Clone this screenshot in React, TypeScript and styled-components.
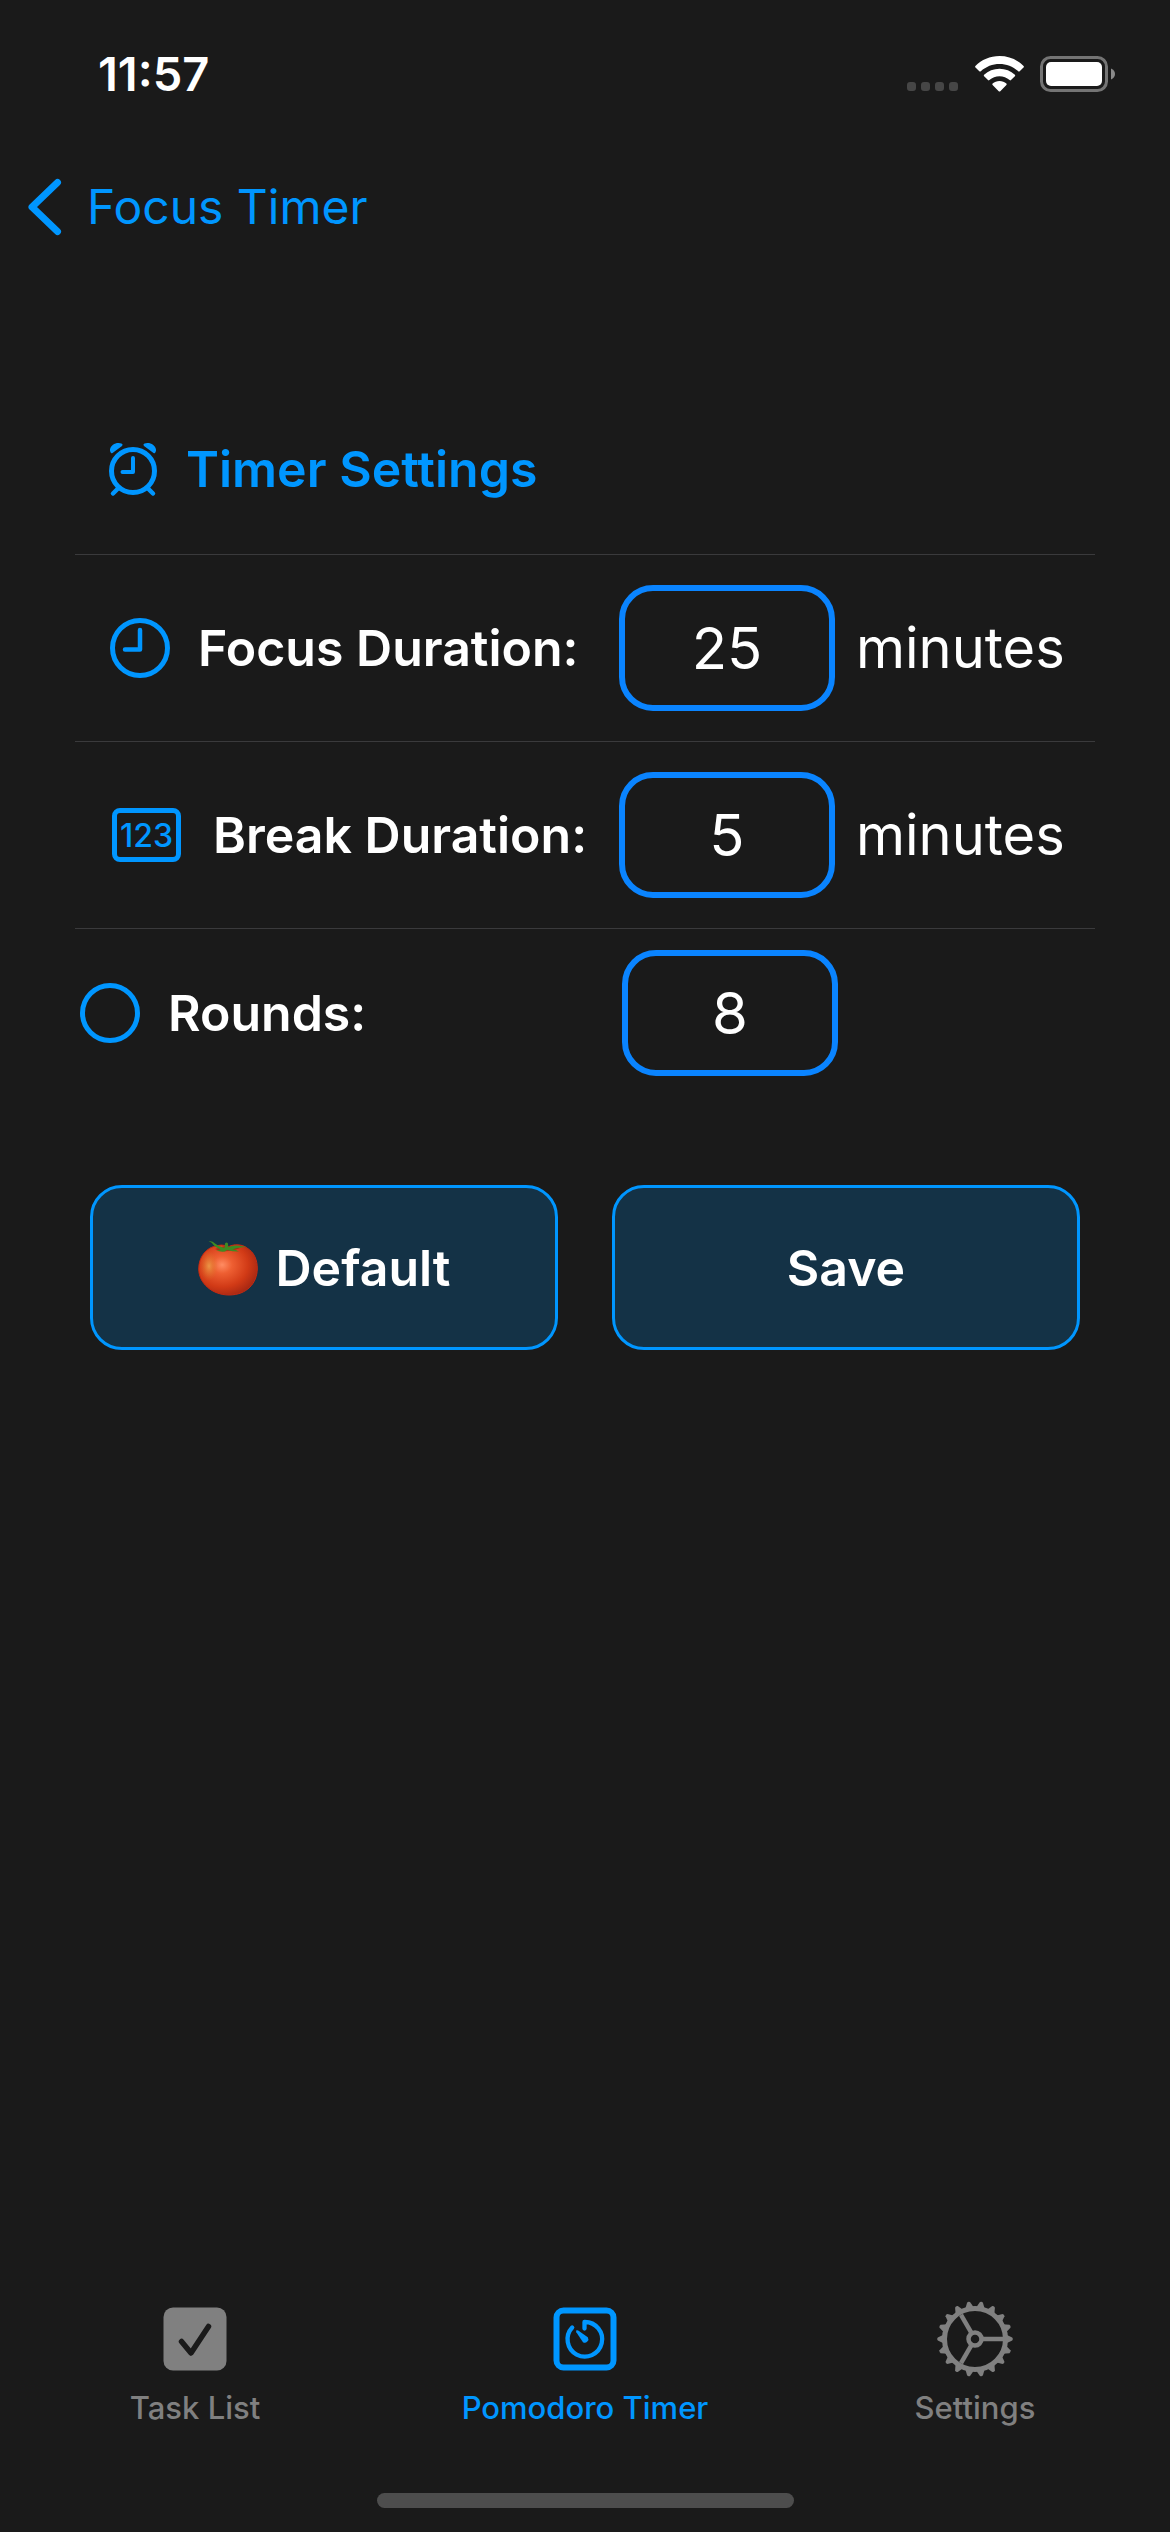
import React, { useState } from "react";
import styled, { createGlobalStyle } from "styled-components";

const accent = "#0096ff";
const fieldBlue = "#0a84ff";
const muted = "#808080";
const surface = "#1a1a1a";

const GlobalStyle = createGlobalStyle`
  *, *::before, *::after { box-sizing: border-box; }
  body {
    margin: 0;
    background: ${surface};
    color: #fff;
    font-family: Inter, "Liberation Sans", sans-serif;
  }
  button, input { font: inherit; color: inherit; margin: 0; }
  svg { display: block; flex: none; }
`;

const Screen = styled.div`
  min-height: 100vh;
  display: flex;
  flex-direction: column;
`;

const StatusBar = styled.div`
  display: flex;
  align-items: center;
  justify-content: space-between;
  height: 148px;
  padding: 0 54px 0 98px;
`;

const Clock = styled.time`
  font-size: 47px;
  line-height: 56px;
  font-weight: 600;
`;

const StatusIcons = styled.div`
  display: flex;
  align-items: center;
  gap: 16px;
`;

const NavBar = styled.nav`
  display: flex;
  align-items: center;
  height: 118px;
  padding-left: 27px;
`;

const BackLink = styled.a`
  display: flex;
  align-items: center;
  gap: 24px;
  color: ${accent};
  font-size: 48px;
  line-height: 60px;
  text-decoration: none;
`;

const Panel = styled.form`
  flex: 1;
  padding: 118px 75px 0;
`;

const Heading = styled.h1`
  display: flex;
  align-items: center;
  gap: 28px;
  height: 171px;
  margin: 0;
  padding-left: 33px;
  border-bottom: 1px solid #3a3a3c;
  color: ${accent};
  font-size: 50px;
  line-height: 60px;
  font-weight: 600;
`;

const Row = styled.div<{ $last?: boolean }>`
  display: grid;
  grid-template-columns: minmax(0, 1fr) 216px ${(p) => (p.$last ? 257 : 260)}px;
  align-items: center;
  padding: ${(p) => (p.$last ? "21px 0" : "30px 0")};
  border-bottom: ${(p) => (p.$last ? "none" : "1px solid #3a3a3c")};
`;

const RowLabel = styled.label<{ $inset: number }>`
  display: flex;
  align-items: center;
  gap: 28px;
  padding-left: ${(p) => p.$inset}px;
  font-size: 50px;
  line-height: 60px;
  font-weight: 600;
  white-space: nowrap;
`;

const NumberField = styled.input`
  width: 100%;
  height: 126px;
  padding: 0;
  border: 6px solid ${fieldBlue};
  border-radius: 34px;
  background: transparent;
  outline: none;
  text-align: center;
  font-size: 58px;
  line-height: 72px;
`;

const Unit = styled.span`
  padding-left: 21px;
  font-size: 56px;
  line-height: 72px;
`;

const Actions = styled.div`
  display: grid;
  grid-template-columns: 1fr 1fr;
  gap: 54px;
  padding: 88px 15px 0;
`;

const ActionButton = styled.button`
  display: flex;
  align-items: center;
  justify-content: center;
  gap: 18px;
  height: 165px;
  padding: 0;
  border: 3px solid ${accent};
  border-radius: 32px;
  background: #143246;
  font-size: 50px;
  line-height: 60px;
  font-weight: 600;
`;

const TabBar = styled.nav`
  display: grid;
  grid-template-columns: repeat(3, 1fr);
`;

const Tab = styled.button<{ $active?: boolean }>`
  display: flex;
  flex-direction: column;
  align-items: center;
  gap: 13px;
  padding: 0;
  border: 0;
  background: none;
  color: ${(p) => (p.$active ? accent : muted)};
  font-size: 31px;
  line-height: 36px;
  font-weight: 500;
`;

const HomeIndicator = styled.div`
  align-self: center;
  width: 417px;
  max-width: 60%;
  height: 15px;
  margin: 67px 0 24px;
  border-radius: 8px;
  background: #4d4d4d;
`;

const SignalDots = () => (
  <svg width="52" height="38" viewBox="0 0 52 38" fill="#464646" aria-hidden="true">
    {[0, 14, 28, 42].map((x) => (
      <rect key={x} x={x} y="27" width="9" height="9" rx="3" />
    ))}
  </svg>
);

const Wifi = () => (
  <svg width="49" height="38" viewBox="0 0 49 38" fill="#fff" aria-hidden="true">
    <path d="M24.5 1C34 1 42.500 4.800 48.600 11Q49.200 11.800 48.500 12.500L44.700 16.300Q43.900 16.900 43.200 16.200C38 11.600 31.500 9 24.500 9S11 11.600 5.800 16.200Q5.100 16.900 4.300 16.300L.5 12.500Q-.2 11.800.4 11C6.500 4.800 15 1 24.500 1Z" />
    <path d="M24.500 13.800C30.400 13.800 35.800 16 39.900 19.800Q40.600 20.500 39.900 21.200L36 25.100Q35.300 25.700 34.600 25.100C31.800 22.700 28.300 21.300 24.500 21.300S17.200 22.700 14.400 25.100Q13.700 25.700 13 25.100L9.100 21.200Q8.400 20.500 9.100 19.800C13.200 16 18.600 13.800 24.500 13.800Z" />
    <path d="M24.500 26C27.200 26 29.600 26.900 31.400 28.500Q32.100 29.200 31.400 29.900L25.300 36.200Q24.500 36.900 23.700 36.200L17.600 29.900Q16.900 29.200 17.600 28.500C19.400 26.900 21.800 26 24.500 26Z" />
  </svg>
);

const Battery = () => (
  <svg width="76" height="38" viewBox="0 0 76 38" aria-hidden="true">
    <rect x="1.500" y="2.500" width="65" height="33" rx="9" fill="none" stroke="#747474" strokeWidth="3" />
    <rect x="6" y="7" width="56" height="24" rx="5" fill="#fff" />
    <path d="M71 13.500C73.600 14.600 75 16.600 75 19S73.600 23.400 71 24.500Z" fill="#8a8a8a" />
  </svg>
);

const Chevron = () => (
  <svg width="36" height="60" viewBox="0 0 36 60" fill="none" stroke={accent} strokeWidth="7" strokeLinecap="round" strokeLinejoin="round" aria-hidden="true">
    <path d="M30.500 5.500 5 30 30.500 54.500" />
  </svg>
);

const AlarmClock = () => (
  <svg width="50" height="56" viewBox="0 0 50 56" fill="none" stroke={accent} strokeLinecap="round" strokeLinejoin="round" aria-hidden="true">
    <circle cx="25" cy="30" r="21.500" strokeWidth="5" />
    <path d="M25 17V31H14.500" strokeWidth="4" />
    <path d="M10.500 47 5 52.500M39.500 47 45 52.500" strokeWidth="4.500" />
    <path d="M2 8.500C3 3.500 9 .5 14 2.800Q15.200 3.800 14 5L4.500 12Q3 12.800 2.500 11Q1.800 10 2 8.500ZM48 8.500C47 3.500 41 .5 36 2.800Q34.800 3.800 36 5L45.500 12Q47 12.800 47.500 11Q48.200 10 48 8.500Z" fill={accent} stroke="none" />
  </svg>
);

const NineOClock = () => (
  <svg width="60" height="60" viewBox="0 0 60 60" fill="none" stroke={accent} strokeLinecap="round" strokeLinejoin="round" aria-hidden="true">
    <circle cx="30" cy="30" r="27.500" strokeWidth="5" />
    <path d="M30 12V31.500H15" strokeWidth="4.500" />
  </svg>
);

const NumbersBox = () => (
  <svg width="75" height="56" viewBox="0 0 75 56" aria-hidden="true">
    <rect x="4.500" y="3.500" width="64" height="49" rx="5.500" fill="none" stroke={accent} strokeWidth="5" />
    <text x="36.500" y="39.500" textAnchor="middle" fill={accent} fontSize="32" fontWeight="500">123</text>
  </svg>
);

const Ring = () => (
  <svg width="60" height="60" viewBox="0 0 60 60" fill="none" stroke={accent} strokeWidth="5" aria-hidden="true">
    <circle cx="30" cy="30" r="27.500" />
  </svg>
);

const Tomato = () => (
  <svg width="60" height="56" viewBox="0 0 60 56" aria-hidden="true">
    <defs>
      <radialGradient id="tomatoSkin" cx=".4" cy=".4" r=".68">
        <stop offset="0" stopColor="#ff8c62" />
        <stop offset=".25" stopColor="#ee5f32" />
        <stop offset=".65" stopColor="#d13a16" />
        <stop offset="1" stopColor="#9f2412" />
      </radialGradient>
      <radialGradient id="tomatoGlow" cx=".5" cy=".5" r=".5">
        <stop offset="0" stopColor="#eca04b" stopOpacity=".85" />
        <stop offset="1" stopColor="#d8701f" stopOpacity="0" />
      </radialGradient>
    </defs>
    <path d="M20 5.500C25 4 29 6.500 31 6.500C36 4 44 4 49 8C56 12 59.500 20 59.300 29C59 43 49 55 31 55C14 55 .7 43 .7 29C.7 17 8 7 20 5.500Z" fill="url(#tomatoSkin)" stroke="#c42a12" />
    <ellipse cx="11" cy="26" rx="9" ry="15" fill="url(#tomatoGlow)" />
    <path d="M17 9Q27 14 42 8Q33 7 27 6Z" fill="#8d1d10" opacity=".6" />
    <path d="M10.500 1.500Q14 .5 17 3.500Q21 7 26.500 8L27 3.500Q28.500 1.500 30 3.500L30.200 7Q37 3.800 48.500 7Q40 7 34.500 9.500Q38 9.500 41 11.500Q34 11.500 29 10L27 11.500Q22 12 18 10.500Q21 10.500 22.500 9.500Q16 6.500 14 3Q12.500 1.500 10.500 1.500Z" fill="#3f8a22" />
  </svg>
);

const CheckSquare = () => (
  <svg width="76" height="76" viewBox="0 0 76 76" aria-hidden="true">
    <rect x="6.500" y="6.500" width="63" height="63" rx="9.500" fill={muted} />
    <path d="M24.500 40.500 34 52 51.500 25.500" fill="none" stroke={surface} strokeWidth="5.500" strokeLinecap="round" strokeLinejoin="round" />
  </svg>
);

const TimerSquare = () => (
  <svg width="76" height="76" viewBox="0 0 76 76" fill="none" stroke={accent} strokeLinecap="round" strokeLinejoin="round" aria-hidden="true">
    <rect x="9.500" y="9.500" width="57" height="57" rx="7" strokeWidth="6" />
    <path d="M37.500 27.500V21A17.300 17.300 0 1 1 25.200 26.500" strokeWidth="4.300" />
    <path d="M29.500 29.300Q30.300 28.900 31.200 29.500L40.800 36.300A3.600 3.600 0 0 1 36 41.300L29.300 31.200Q28.700 30 29.500 29.300Z" fill={accent} stroke="none" />
  </svg>
);

const Gear = () => (
  <svg width="76" height="76" viewBox="0 0 76 76" fill="none" stroke={muted} aria-hidden="true">
    <circle cx="38" cy="38" r="30.500" strokeWidth="5" />
    <circle cx="38" cy="38" r="6.500" strokeWidth="4.500" />
    {[0, 120, 240].map((a) => (
      <path key={a} d="M46 38H66" strokeWidth="4.500" transform={`rotate(${a} 38 38)`} />
    ))}
    {Array.from({ length: 18 }, (_, i) => (
      <path key={i} d="M69 33.500 75.200 36.500Q76.400 38 75.200 39.500L69 42.500Z" fill={muted} stroke="none" transform={`rotate(${i * 20} 38 38)`} />
    ))}
  </svg>
);

export default function App() {
  const [focus, setFocus] = useState("25");
  const [rest, setRest] = useState("5");
  const [rounds, setRounds] = useState("8");

  const restoreDefaults = () => {
    setFocus("25");
    setRest("5");
    setRounds("8");
  };

  return (
    <Screen>
      <GlobalStyle />
      <StatusBar>
        <Clock>11:57</Clock>
        <StatusIcons>
          <SignalDots />
          <Wifi />
          <Battery />
        </StatusIcons>
      </StatusBar>

      <NavBar>
        <BackLink href="#timer">
          <Chevron />
          Focus Timer
        </BackLink>
      </NavBar>

      <Panel onSubmit={(e) => e.preventDefault()}>
        <Heading>
          <AlarmClock />
          Timer Settings
        </Heading>
        <Row>
          <RowLabel htmlFor="focus" $inset={35}>
            <NineOClock />
            Focus Duration:
          </RowLabel>
          <NumberField id="focus" inputMode="numeric" value={focus} onChange={(e) => setFocus(e.target.value)} />
          <Unit>minutes</Unit>
        </Row>
        <Row>
          <RowLabel htmlFor="break" $inset={35}>
            <NumbersBox />
            Break Duration:
          </RowLabel>
          <NumberField id="break" inputMode="numeric" value={rest} onChange={(e) => setRest(e.target.value)} />
          <Unit>minutes</Unit>
        </Row>
        <Row $last>
          <RowLabel htmlFor="rounds" $inset={5}>
            <Ring />
            Rounds:
          </RowLabel>
          <NumberField id="rounds" inputMode="numeric" value={rounds} onChange={(e) => setRounds(e.target.value)} />
        </Row>
        <Actions>
          <ActionButton type="button" onClick={restoreDefaults}>
            <Tomato />
            Default
          </ActionButton>
          <ActionButton type="submit">Save</ActionButton>
        </Actions>
      </Panel>

      <TabBar>
        <Tab type="button">
          <CheckSquare />
          Task List
        </Tab>
        <Tab type="button" $active>
          <TimerSquare />
          Pomodoro Timer
        </Tab>
        <Tab type="button">
          <Gear />
          Settings
        </Tab>
      </TabBar>
      <HomeIndicator />
    </Screen>
  );
}
